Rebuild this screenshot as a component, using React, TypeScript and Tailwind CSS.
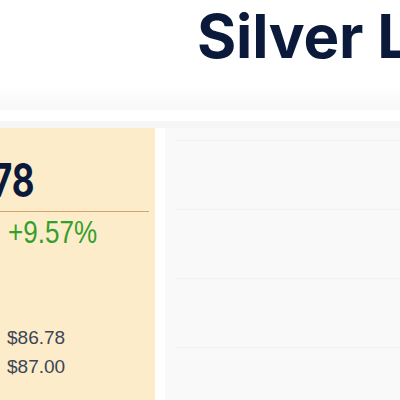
export default function App() {
  const rows = [0, 1, 2, 3];
  const arial = '"Liberation Sans", Arial, sans-serif';

  return (
    <div className="w-[400px] h-[400px] overflow-hidden bg-white flex flex-col" style={{ fontFamily: 'Inter, "Liberation Sans", sans-serif' }}>
      {/* header title */}
      <header className="h-[85px] shrink-0 pt-[6px] pl-[197px] whitespace-nowrap overflow-hidden">
        <h1 className="text-[60px] leading-none font-bold text-[#0b1a3b] tracking-[-0.2px]">Silver Live Price</h1>
      </header>

      <div className="h-[25px] shrink-0 bg-gradient-to-b from-white to-[#f8f8f8]" />
      <div className="h-[11px] shrink-0 bg-white" />
      <div className="h-[7px] shrink-0 bg-[#f6f6f6]" />

      <main className="flex flex-1 min-h-0">
        {/* price card */}
        <section className="w-[155px] shrink-0 bg-[#fdecc9] pr-[6px] overflow-hidden flex flex-col">
          <div className="pt-[24px] h-[84px] border-b border-[#d4a56c] whitespace-nowrap">
            <span className="inline-block origin-left scale-x-[0.76] -ml-[8px] text-[46px] leading-[56px] font-bold text-[#0b1a3b]">78</span>
          </div>
          <p className="pl-[8px] pt-[4px] text-[31px] leading-[34px] text-[#34a02c] whitespace-nowrap" style={{ fontFamily: arial }}>
            <span className="inline-block origin-left scale-x-[0.84]">+9.57%</span>
          </p>
          <div className="pl-[7px] pt-[73px] text-[19px] leading-[29px] text-[#3a4658]" style={{ fontFamily: arial }}>
            <div>$86.78</div>
            <div>$87.00</div>
          </div>
        </section>

        <div className="w-[10px] shrink-0 bg-white" />

        {/* chart panel */}
        <section className="flex-1 bg-[#f9f9f9] pl-[11px] pt-[12px]">
          {rows.map((r) => (
            <div key={r} className="h-[69px] border-t border-[#f2f2f2]" />
          ))}
        </section>
      </main>
    </div>
  );
}
